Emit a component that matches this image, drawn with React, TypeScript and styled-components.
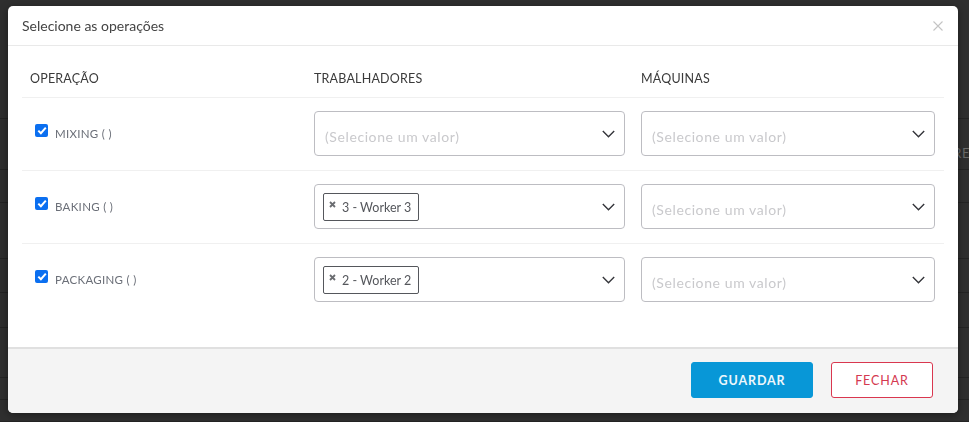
import React from 'react';
import styled, { createGlobalStyle } from 'styled-components';

const GlobalStyle = createGlobalStyle`
  html, body {
    margin: 0;
    padding: 0;
    background: #2f2f2f;
    font-family: Lato, "Noto Sans", sans-serif;
    overflow: hidden;
  }
  * { box-sizing: border-box; }
`;

interface Operation {
  name: string;
  workers: string[];
}

const operations: Operation[] = [
  { name: 'MIXING ( )', workers: [] },
  { name: 'BAKING ( )', workers: ['3 - Worker 3'] },
  { name: 'PACKAGING ( )', workers: ['2 - Worker 2'] },
];

const backdropRows = [119, 51, 33, 56, 34, 35, 50, 22, 22];

// page behind the overlay
const Page = styled.div`
  width: 969px;
  height: 422px;
  background: #2f2f2f;
  display: flex;
  flex-direction: column;
`;

const PageRow = styled.div<{ $h: number }>`
  height: ${(p) => p.$h}px;
  flex: none;
  border-bottom: 1px solid #242424;
  display: flex;
  justify-content: flex-end;
  align-items: flex-end;
`;

const PageHeader = styled.span`
  font-size: 13px;
  color: #6a6a6a;
  letter-spacing: 0.5px;
  margin-right: -1px;
  margin-bottom: 8px;
`;

const Dialog = styled.div`
  position: fixed;
  top: 6px;
  left: 8px;
  width: 950px;
  height: 407px;
  background: #fff;
  border-radius: 5px;
  overflow: hidden;
  display: flex;
  flex-direction: column;
  box-shadow: 0 2px 8px rgba(0, 0, 0, 0.4);
`;

const Header = styled.div`
  height: 40px;
  flex: none;
  display: flex;
  align-items: center;
  justify-content: space-between;
  padding: 0 14px 0 14px;
  border-bottom: 1px solid #e9e9e9;
`;

const Title = styled.h5`
  margin: 0;
  font-size: 14px;
  font-weight: 400;
  color: #444;
`;

const Close = styled.button`
  border: 0;
  background: none;
  padding: 0;
  width: 12px;
  height: 12px;
  display: flex;
  cursor: pointer;
`;

const Body = styled.div`
  flex: 1;
  padding: 17px 14px 0 14px;
`;

const Row = styled.div<{ $last?: boolean }>`
  display: grid;
  grid-template-columns: 284px 327px 310px;
  border-bottom: ${(p) => (p.$last ? 'none' : '1px solid #f0f0f0')};
`;

const HeadCell = styled.div`
  height: 34px;
  padding: 0 8px 4px 8px;
  display: flex;
  align-items: center;
  font-size: 12.5px;
  color: #3a3a3a;
  letter-spacing: 0.2px;
`;

const Cell = styled.div`
  padding: 13px 8px 14px 8px;
  display: flex;
  align-items: center;
`;

const CheckLabel = styled.label`
  display: flex;
  align-items: center;
  gap: 7px;
  margin-left: 5px;
  font-size: 11.5px;
  color: #6b6f78;
  letter-spacing: 0.3px;
`;

const CheckBox = styled.span`
  width: 13px;
  height: 13px;
  border-radius: 2px;
  background: #0b6ff0;
  display: flex;
  align-items: center;
  justify-content: center;
  margin-top: -6px;
`;

const Select = styled.div`
  width: 100%;
  height: 45px;
  border: 1px solid #bdbdc2;
  border-radius: 4px;
  display: flex;
  align-items: center;
  justify-content: space-between;
  padding: 0 9px 0 8px;
`;

const Placeholder = styled.span`
  font-size: 14px;
  color: #c9c9cc;
  letter-spacing: 0.6px;
  margin-left: 2px;
  margin-top: 6px;
`;

const Chip = styled.span`
  display: inline-flex;
  align-items: center;
  gap: 6px;
  height: 28px;
  padding: 0 7px 0 5px;
  border: 1px solid #55575c;
  border-radius: 2px;
  font-size: 12.5px;
  color: #55575c;
`;

const ChipX = styled.span`
  display: flex;
  margin-top: -5px;
`;

const Footer = styled.div`
  height: 66px;
  flex: none;
  background: #f4f4f4;
  border-top: 2px solid #e0e0e0;
  display: flex;
  justify-content: flex-end;
  align-items: flex-start;
  gap: 18px;
  padding: 13px 25px 0 0;
`;

const Button = styled.button<{ $primary?: boolean }>`
  height: 36px;
  width: ${(p) => (p.$primary ? '122px' : '102px')};
  border-radius: 3px;
  font-family: inherit;
  font-size: 12.5px;
  font-weight: ${(p) => (p.$primary ? 700 : 400)};
  letter-spacing: 0.9px;
  background: ${(p) => (p.$primary ? '#0897d7' : '#fff')};
  color: ${(p) => (p.$primary ? '#eef7fc' : '#d4384f')};
  border: 1px solid ${(p) => (p.$primary ? '#0897d7' : '#d9374f')};
  cursor: pointer;
`;

const Chevron = () => (
  <svg width="13" height="8" viewBox="0 0 13 8">
    <path d="M0.8 1l5.7 5.7L12.2 1" fill="none" stroke="#35363b" strokeWidth="1.4" />
  </svg>
);

const Tick = () => (
  <svg width="10" height="9" viewBox="0 0 10 9">
    <path d="M1.3 4.6l2.6 2.6L8.8 1.6" fill="none" stroke="#fff" strokeWidth="2" />
  </svg>
);

const SmallX = () => (
  <svg width="7" height="7" viewBox="0 0 7 7">
    <path d="M1 1l5 5M6 1L1 6" stroke="#6a6c70" strokeWidth="1.8" />
  </svg>
);

const ValueSelect: React.FC<{ values: string[] }> = ({ values }) => (
  <Select>
    {values.length === 0 ? (
      <Placeholder>(Selecione um valor)</Placeholder>
    ) : (
      <div>
        {values.map((v) => (
          <Chip key={v}>
            <ChipX>
              <SmallX />
            </ChipX>
            {v}
          </Chip>
        ))}
      </div>
    )}
    <Chevron />
  </Select>
);

const App: React.FC = () => {
  return (
    <>
      <GlobalStyle />
      <Page>
        {backdropRows.map((h, i) => (
          <PageRow key={i} $h={h}>
            {i === 1 && <PageHeader>RE</PageHeader>}
          </PageRow>
        ))}
      </Page>
      <Dialog>
        <Header>
          <Title>Selecione as operações</Title>
          <Close aria-label="close">
            <svg width="12" height="12" viewBox="0 0 12 12">
              <path d="M1.5 1.5l9 9M10.5 1.5l-9 9" stroke="#c4c4c4" strokeWidth="1.1" />
            </svg>
          </Close>
        </Header>
        <Body>
          <Row>
            <HeadCell>OPERAÇÃO</HeadCell>
            <HeadCell>TRABALHADORES</HeadCell>
            <HeadCell>MÁQUINAS</HeadCell>
          </Row>
          {operations.map((op, i) => (
            <Row key={op.name} $last={i === operations.length - 1}>
              <Cell>
                <CheckLabel>
                  <CheckBox>
                    <Tick />
                  </CheckBox>
                  {op.name}
                </CheckLabel>
              </Cell>
              <Cell>
                <ValueSelect values={op.workers} />
              </Cell>
              <Cell>
                <ValueSelect values={[]} />
              </Cell>
            </Row>
          ))}
        </Body>
        <Footer>
          <Button $primary>GUARDAR</Button>
          <Button>FECHAR</Button>
        </Footer>
      </Dialog>
    </>
  );
};

export default App;
